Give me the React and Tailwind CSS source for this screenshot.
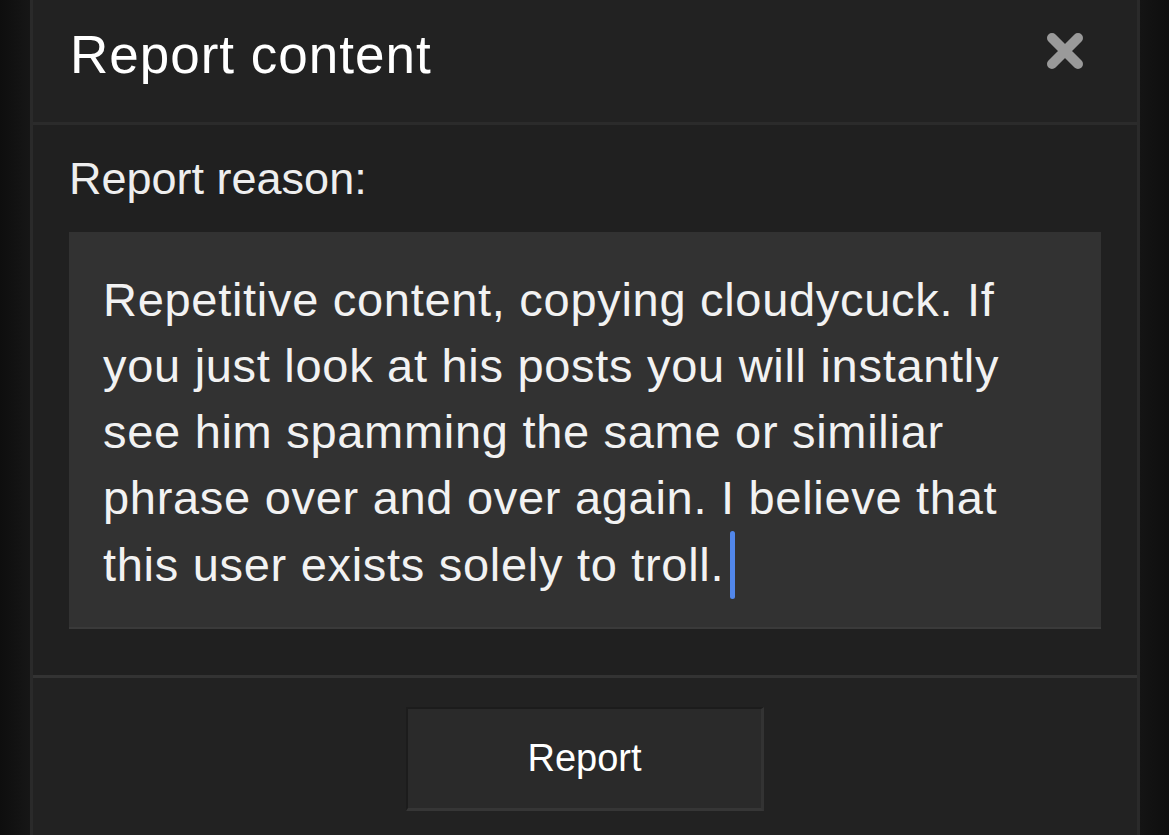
const lines = [
  "Repetitive content, copying cloudycuck. If",
  "you just look at his posts you will instantly",
  "see him spamming the same or similiar",
  "phrase over and over again. I believe that",
  "this user exists solely to troll.",
];

const CloseIcon = () => (
  <svg width="40" height="40" viewBox="0 0 40 40" aria-hidden="true">
    <path
      d="M7 7 L33 33 M33 7 L7 33"
      stroke="#9a9a9a"
      strokeWidth="10"
      strokeLinecap="round"
    />
  </svg>
);

const ReportDialog = () => {
  return (
    <div className="w-[1110px] h-full flex flex-col bg-[#212121] border-x-[3px] border-[#2a2a2a]">
      {/* header */}
      <div className="h-[125px] flex items-start justify-between pl-[37px] pr-[52px] bg-[#222222] border-b-[3px] border-[#2b2b2b] shrink-0">
        <h2 className="mt-[28px] text-[53px] leading-none tracking-[1px] text-white">
          Report content
        </h2>
        <button className="mt-[31px]">
          <CloseIcon />
        </button>
      </div>

      {/* body */}
      <div className="px-[36px] pt-[28px] pb-[46px] bg-[#202020] shrink-0">
        <label className="block text-[45px] leading-[52px] text-[#eeeeee]">
          Report reason:
        </label>
        <div className="mt-[27px] bg-[#323232] border-b-2 border-[#3a3a3a] pl-[34px] pr-[20px] pt-[35px] pb-[28px]">
          {lines.map((line, i) => (
            <div
              key={i}
              className="text-[47px] leading-[66px] tracking-[0.7px] text-[#f2f2f2] whitespace-nowrap flex items-center"
            >
              {line}
              {i === lines.length - 1 && (
                <span className="inline-block w-[5px] h-[68px] ml-[6px] rounded-full bg-[#5287ea]"></span>
              )}
            </div>
          ))}
        </div>
      </div>

      {/* footer */}
      <div className="flex-1 flex justify-center pt-[29px] bg-[#222222] border-t-[3px] border-[#333333]">
        <button className="w-[358px] h-[104px] bg-[#2a2a2a] border-t-2 border-l-2 border-[#1c1c1c] border-b-[3px] border-r-[3px] border-b-[#363636] border-r-[#333333] text-[38px] text-white">
          Report
        </button>
      </div>
    </div>
  );
};

export default function App() {
  return (
    <div
      className="w-[1169px] h-[835px] overflow-hidden flex bg-[#111111]"
      style={{ fontFamily: '"Liberation Sans", Arial, sans-serif' }}
    >
      <div className="w-[30px] h-full bg-gradient-to-r from-[#0e0e0e] to-[#161616]"></div>
      <ReportDialog />
      <div className="flex-1 h-full bg-gradient-to-r from-[#141414] to-[#0e0e0e]"></div>
    </div>
  );
}
